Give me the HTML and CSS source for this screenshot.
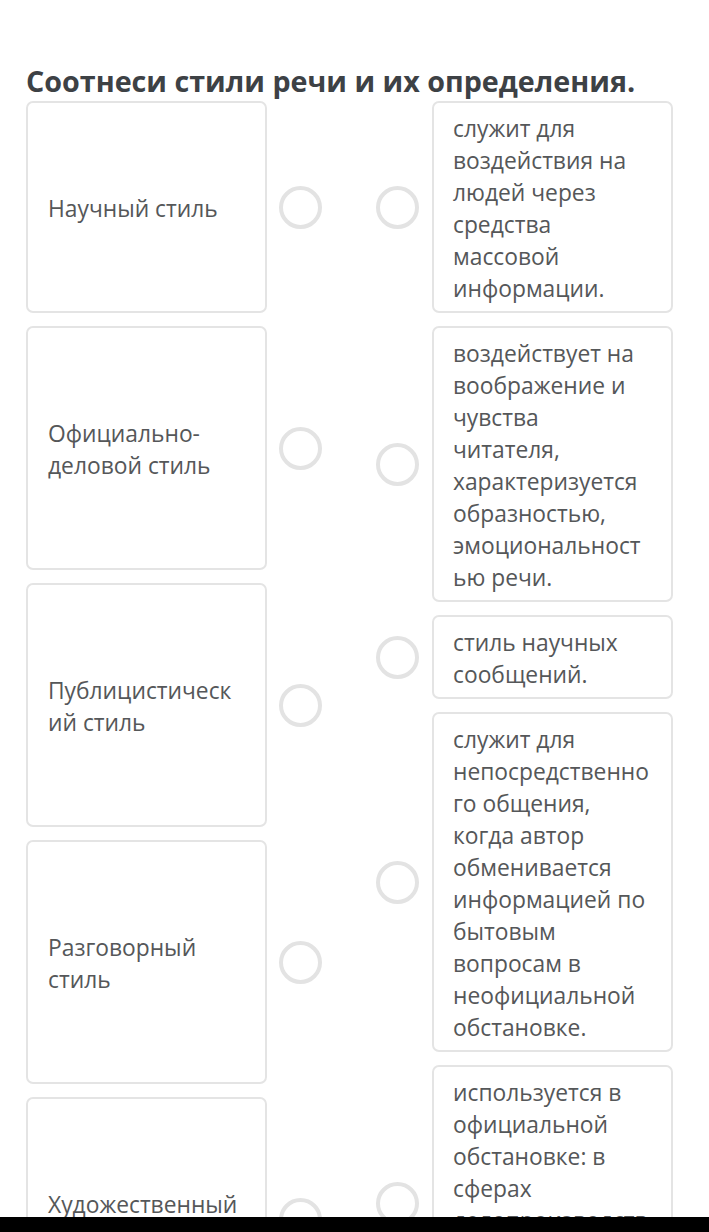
FILE: index.html
```html
<!DOCTYPE html>
<html lang="ru">
<head>
<meta charset="utf-8">
<link rel="stylesheet" href="styles.css">
</head>
<body>
<div class="page">
  <h1 class="title">Соотнеси стили речи и их определения.</h1>
  <div class="match">
    <div class="col col-left">
      <div class="row"><div class="card card-left h1">Научный стиль</div><span class="dot"></span></div>
      <div class="row"><div class="card card-left h2">Официально-деловой стиль</div><span class="dot"></span></div>
      <div class="row"><div class="card card-left h2">Публицистический стиль</div><span class="dot"></span></div>
      <div class="row"><div class="card card-left h2">Разговорный стиль</div><span class="dot"></span></div>
      <div class="row"><div class="card card-left h2">Художественный стиль</div><span class="dot"></span></div>
    </div>
    <div class="col col-right">
      <div class="row"><span class="dot"></span><div class="card card-right">служит для воздействия на людей через средства массовой информации.</div></div>
      <div class="row"><span class="dot"></span><div class="card card-right">воздействует на воображение и чувства читателя, характеризуется образностью, эмоциональностью речи.</div></div>
      <div class="row"><span class="dot"></span><div class="card card-right">стиль научных сообщений.</div></div>
      <div class="row"><span class="dot"></span><div class="card card-right">служит для непосредственного общения, когда автор обменивается информацией по бытовым вопросам в неофициальной обстановке.</div></div>
      <div class="row"><span class="dot"></span><div class="card card-right">используется в официальной обстановке: в сферах делопроизводства, законодательства, дипломатии.</div></div>
    </div>
  </div>
</div>
<div class="bar"></div>
</body>
</html>
```

FILE: styles.css
```css
html, body {
  margin: 0;
  padding: 0;
  background: #ffffff;
}
body {
  font-family: "Open Sans", "Noto Sans", sans-serif;
  height: 1232px;
  overflow: hidden;
  display: flex;
  flex-direction: column;
}
.page {
  height: 1217px;
  flex: none;
  overflow: hidden;
  padding: 0 36px 0 26px;
}
.title {
  margin: 62px 0 0 0;
  font-size: 28.7px;
  line-height: 38px;
  font-weight: 700;
  color: #3d4145;
  white-space: nowrap;
}
.match {
  display: flex;
  margin-top: 1px;
  gap: 54px;
}
.col {
  display: flex;
  flex-direction: column;
  gap: 13px;
}
.row {
  display: flex;
  align-items: center;
}
.col-left .row { gap: 12px; }
.col-right .row { gap: 13px; }
.card {
  box-sizing: border-box;
  width: 241px;
  border: 2px solid #e4e4e4;
  border-radius: 7px;
  color: #555759;
  font-size: 22.8px;
  line-height: 32px;
  overflow-wrap: anywhere;
}
.card-left {
  display: flex;
  align-items: center;
  padding: 4px 24px 0 20px;
}
.card-left.h1 { height: 212px; }
.card-left.h2 { height: 244px; }
.card-right {
  padding: 10px 20px 6px 19px;
}
.dot {
  flex: none;
  box-sizing: border-box;
  width: 43px;
  height: 43px;
  border: 4px solid #e3e3e3;
  border-radius: 50%;
}
.bar {
  height: 15px;
  flex: none;
  background: #000000;
}
```
